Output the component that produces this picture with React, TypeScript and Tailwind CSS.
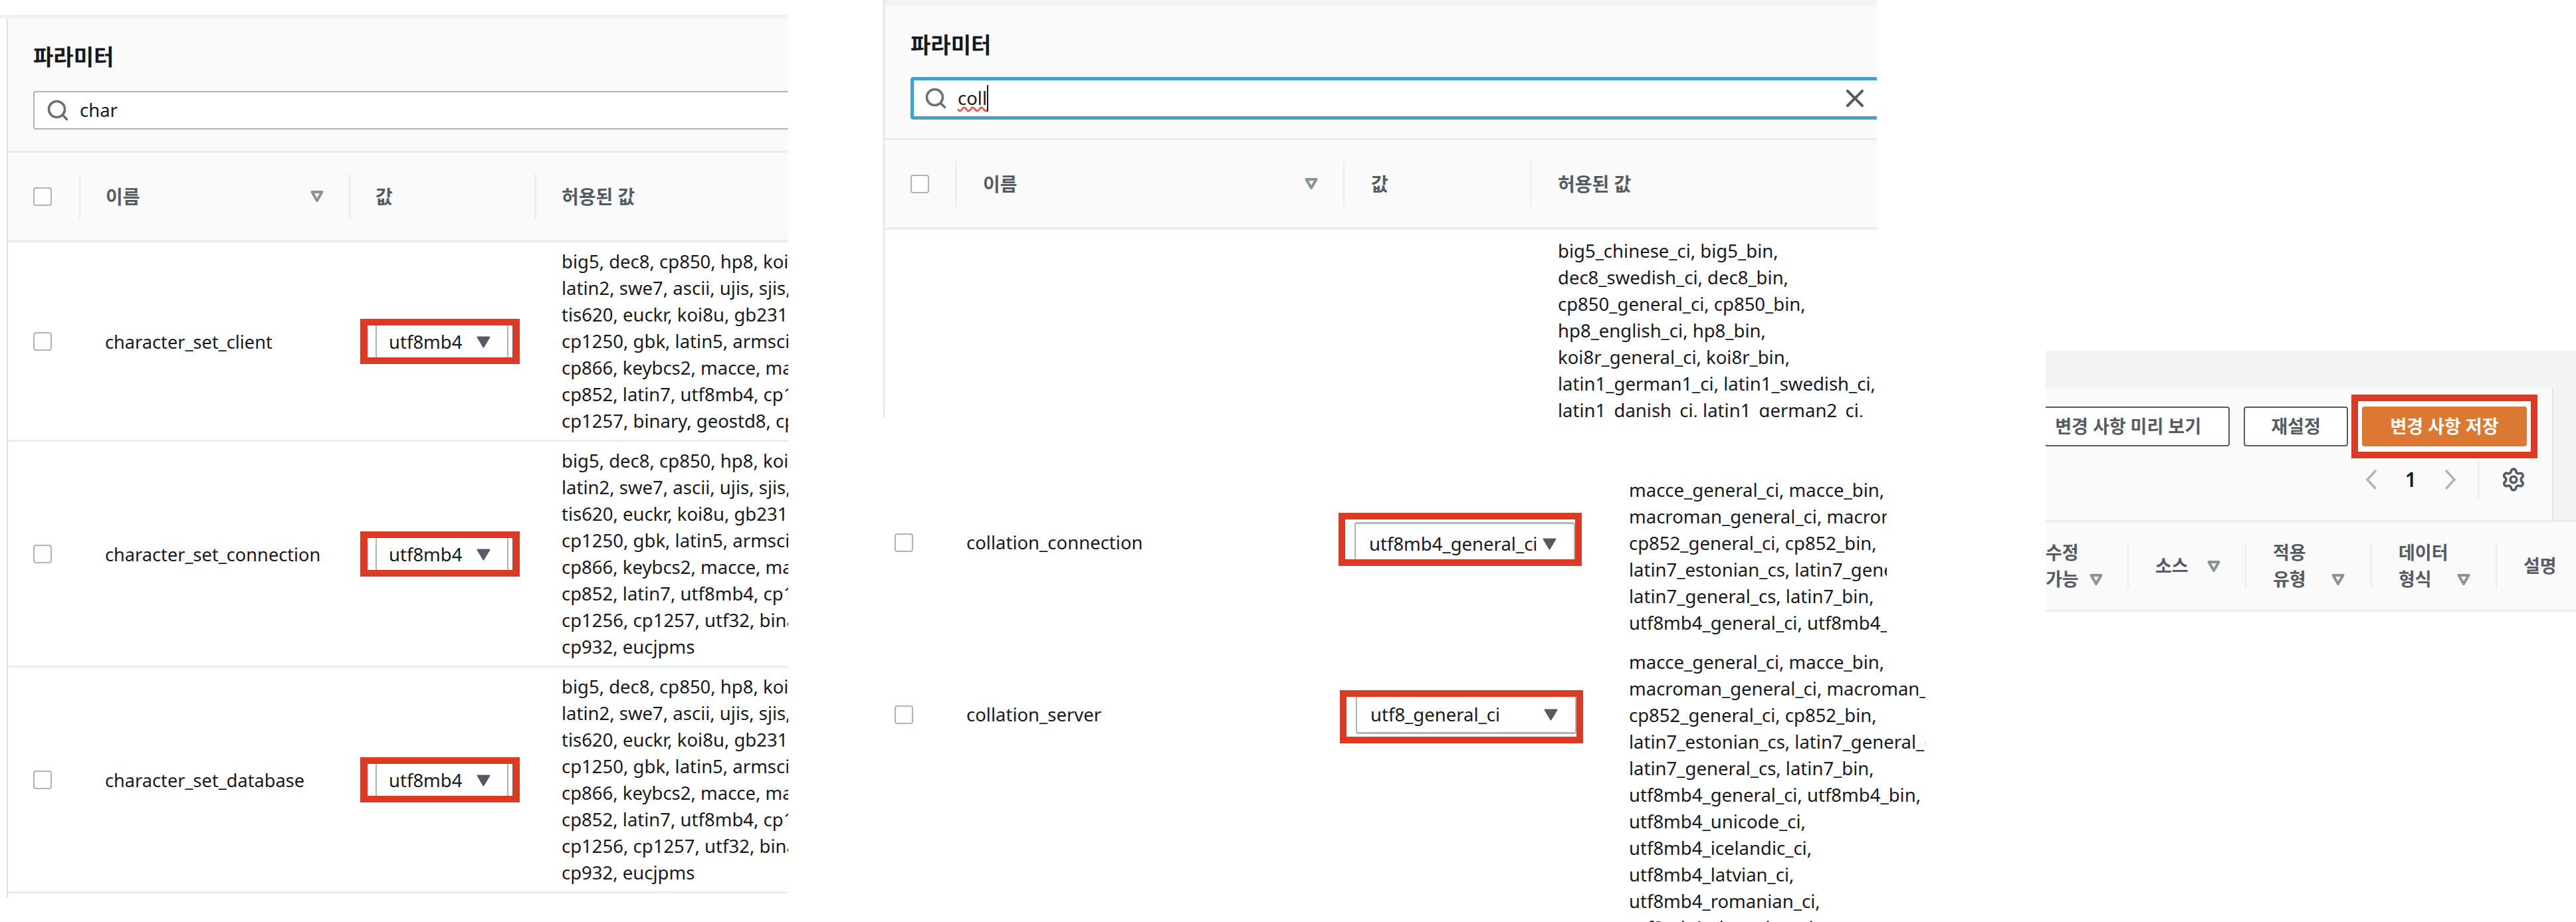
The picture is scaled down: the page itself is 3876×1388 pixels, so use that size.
import React from "react";
import { Search, X, Settings } from "lucide-react";

const FONT = "font-['Noto_Sans','Noto_Sans_CJK_KR',sans-serif]";

const SortIcon = () => (
  <svg width="20" height="17" viewBox="0 0 20 17" className="shrink-0">
    <path d="M2.5 2H17.5L10 15Z" fill="none" stroke="#879596" strokeWidth="4" strokeLinejoin="round" />
  </svg>
);

const SelectCaret = () => (
  <svg width="21" height="18" viewBox="0 0 21 18" className="shrink-0">
    <path d="M1.5 1.5H19.5L10.5 16.5Z" fill="#545b64" stroke="#545b64" strokeWidth="2" strokeLinejoin="round" />
  </svg>
);

const Chevron = ({ dir }: { dir: "l" | "r" }) => (
  <svg width="20" height="32" viewBox="0 0 20 32" className="shrink-0">
    <path
      d={dir === "l" ? "M17 2L4 16L17 30" : "M3 2L16 16L3 30"}
      fill="none"
      stroke="#aab7b8"
      strokeWidth="3.5"
    />
  </svg>
);

const Checkbox = () => (
  <div className="w-[28px] h-[28px] shrink-0 rounded-[4px] border-2 border-[#aab7b8] bg-white" />
);

const Divider = () => <div className="w-[2px] h-[68px] bg-[#eaeded] shrink-0" />;

const HeadLabel = ({ children, pad }: { children: React.ReactNode; pad: string }) => (
  <span className={`${pad} text-[28px] font-semibold text-[#545b64] whitespace-nowrap`}>{children}</span>
);

const HeadRow = ({
  widths,
  boxPad,
  pad,
}: {
  widths: string[];
  boxPad: string;
  pad: string;
}) => (
  <div className="flex items-center h-[138px] bg-[#fafafa] border-b-[4px] border-[#eaeded] border-t-[3px]">
    <div className={`${widths[0]} flex items-center justify-between shrink-0`}>
      <div className={boxPad}>
        <Checkbox />
      </div>
      <Divider />
    </div>
    <div className={`${widths[1]} flex items-center justify-between shrink-0`}>
      <HeadLabel pad={pad}>이름</HeadLabel>
      <div className="flex items-center gap-[38px]">
        <SortIcon />
        <Divider />
      </div>
    </div>
    <div className={`${widths[2]} flex items-center justify-between shrink-0`}>
      <HeadLabel pad={pad}>값</HeadLabel>
      <Divider />
    </div>
    <HeadLabel pad={pad}>허용된 값</HeadLabel>
  </div>
);

const Lines = ({ lines, className = "" }: { lines: string[]; className?: string }) => (
  <div className={`overflow-hidden whitespace-nowrap text-[27.5px] leading-[40px] text-[#16191f] ${className}`}>
    {lines.map((l, i) => (
      <div key={i}>{l}</div>
    ))}
  </div>
);

const set7 = [
  "big5, dec8, cp850, hp8, koi8r, latin1,",
  "latin2, swe7, ascii, ujis, sjis, hebrew,",
  "tis620, euckr, koi8u, gb2312, greek,",
  "cp1250, gbk, latin5, armscii8, utf8, ucs2,",
  "cp866, keybcs2, macce, macroman,",
  "cp852, latin7, utf8mb4, cp1251, utf16,",
  "cp1257, binary, geostd8, cp932, eucjpms",
];
const set8 = [
  ...set7.slice(0, 6),
  "cp1256, cp1257, utf32, binary, geostd8,",
  "cp932, eucjpms",
];

const CharRow = ({ name, lines, h }: { name: string; lines: string[]; h: string }) => (
  <div className={`flex items-center ${h} bg-white border-b-[3px] border-[#eaeded]`}>
    <div className="w-[109px] pl-[38px] shrink-0">
      <Checkbox />
    </div>
    <div className="w-[406px] pl-[37px] pt-[3px] shrink-0 text-[27.2px] text-[#16191f] whitespace-nowrap">{name}</div>
    <div className="w-[318px] pl-[15px] shrink-0">
      <div className="w-[240px] h-[68px] border-x-[11px] border-y-[10px] border-[#db3a25] bg-white flex">
        <div className="ml-[12px] w-[200px] border-x-2 border-[#aab7b8] flex items-center pl-[18px] pt-[2px] text-[27.5px] text-[#16191f] gap-[22px]">
          <span>utf8mb4</span>
          <SelectCaret />
        </div>
      </div>
    </div>
    <Lines lines={lines} />
  </div>
);

const CollRow = ({
  name,
  value,
  lines,
  listClass,
  redClass,
  rowH,
  selectClass,
}: {
  name: string;
  value: string;
  lines: string[];
  listClass: string;
  redClass: string;
  rowH: string;
  selectClass: string;
}) => (
  <div className={`flex items-start ${rowH}`}>
    <div className="flex items-center h-[198px]">
      <div className="ml-[17px] w-[108px] shrink-0">
        <Checkbox />
      </div>
      <div className="w-[560px] shrink-0 text-[27.5px] text-[#16191f] whitespace-nowrap">{name}</div>
      <div className={`${redClass} w-[366px] h-[80px] shrink-0 border-[10px] border-[#db3a25] bg-white flex`}>
        <div
          className={`${selectClass} ml-[14px] w-[332px] border-x-2 border-[#aab7b8] flex items-center pl-[20px] text-[27.5px] text-[#16191f] justify-between pr-[26px] whitespace-nowrap`}
        >
          <span>{value}</span>
          <SelectCaret />
        </div>
      </div>
    </div>
    <Lines lines={lines} className={listClass} />
  </div>
);

export default function App() {
  return (
    <div className={`${FONT} w-[3876px] h-[1388px] overflow-hidden bg-white flex items-start`}>
      {/* first crop */}
      <div className="w-[1186px] h-[1352px] overflow-hidden pt-[22px] shrink-0">
        <div className="h-[6px] bg-[#f2f3f3]" />
        <div className="ml-[10px] h-[1324px] w-[1500px] border-l-2 border-[#dfe3e3]">
          <div className="h-[199px] bg-[#fafafa] pl-[38px] pt-[34px]">
            <div className="h-[48px] flex items-center text-[33px] font-bold text-[#16191f]">파라미터</div>
            <div className="mt-[27px] h-[58px] w-[1200px] flex items-center rounded-[4px] border-2 border-[#aab7b8] bg-white pl-[17px]">
              <Search size={36} strokeWidth={2.4} className="text-[#687078] shrink-0" />
              <span className="ml-[15px] text-[#16191f] text-[27.5px] leading-[40px]">char</span>
            </div>
          </div>
          <HeadRow widths={["w-[109px]", "w-[406px]", "w-[280px]"]} boxPad="pl-[38px]" pad="pl-[38px]" />
          <CharRow name="character_set_client" lines={set7} h="h-[300px]" />
          <CharRow name="character_set_connection" lines={set8} h="h-[340px]" />
          <CharRow name="character_set_database" lines={set8} h="h-[340px]" />
        </div>
      </div>

      {/* second crop */}
      <div className="ml-[143px] w-[1568px] h-[1388px] shrink-0 overflow-hidden">
        <div className="w-[1495px] h-[628px] overflow-hidden border-l-2 border-[#dfe3e3]">
          <div className="h-[9px] bg-[#f2f3f3]" />
          <div className="h-[199px] bg-[#fafafa] pl-[39px] pt-[35px]">
            <div className="h-[48px] flex items-center text-[33px] font-bold text-[#16191f]">파라미터</div>
            <div className="mt-[24px] h-[64px] w-[1480px] flex items-center rounded-[4px] border-[5px] border-[#44a0c8] bg-white pl-[15px]">
              <Search size={36} strokeWidth={2.4} className="text-[#687078] shrink-0" />
              <span className="ml-[15px] text-[#16191f] text-[27.5px] leading-[40px] underline decoration-wavy decoration-[#e8534f] border-r-2 border-[#16191f]">
                coll
              </span>
              <div className="flex-1" />
              <X size={44} strokeWidth={2.2} className="text-[#545b64] mr-[32px]" />
            </div>
          </div>
          <HeadRow widths={["w-[108px]", "w-[584px]", "w-[281px]"]} boxPad="pl-[39px]" pad="pl-[40px]" />
          <div className="pl-[1013px] pt-[12px]">
            <Lines
              lines={[
                "big5_chinese_ci, big5_bin,",
                "dec8_swedish_ci, dec8_bin,",
                "cp850_general_ci, cp850_bin,",
                "hp8_english_ci, hp8_bin,",
                "koi8r_general_ci, koi8r_bin,",
                "latin1_german1_ci, latin1_swedish_ci,",
                "latin1_danish_ci, latin1_german2_ci,",
              ]}
            />
          </div>
        </div>
        <div className="pt-[90px]">
          <CollRow
            name="collation_connection"
            value="utf8mb4_general_ci"
            listClass="w-[388px] ml-[71px]"
            redClass="mb-[10px]"
            rowH="h-[259px]"
            selectClass="mt-[4px] pt-[6px] border-t-[3px] rounded-t-[4px]"
            lines={[
              "macce_general_ci, macce_bin,",
              "macroman_general_ci, macroman_bin,",
              "cp852_general_ci, cp852_bin,",
              "latin7_estonian_cs, latin7_general_ci,",
              "latin7_general_cs, latin7_bin,",
              "utf8mb4_general_ci, utf8mb4_bin,",
            ]}
          />
          <CollRow
            name="collation_server"
            value="utf8_general_ci"
            listClass="w-[446px] ml-[69px]"
            redClass="ml-[2px] mt-[6px]"
            rowH="h-[440px]"
            selectClass="mb-[4px] border-b-[3px] rounded-b-[4px]"
            lines={[
              "macce_general_ci, macce_bin,",
              "macroman_general_ci, macroman_bin,",
              "cp852_general_ci, cp852_bin,",
              "latin7_estonian_cs, latin7_general_ci,",
              "latin7_general_cs, latin7_bin,",
              "utf8mb4_general_ci, utf8mb4_bin,",
              "utf8mb4_unicode_ci,",
              "utf8mb4_icelandic_ci,",
              "utf8mb4_latvian_ci,",
              "utf8mb4_romanian_ci,",
              "utf8mb4_slovenian_ci,",
            ]}
          />
        </div>
      </div>

      {/* third crop */}
      <div className="ml-[181px] w-[798px] mt-[528px] shrink-0 overflow-hidden">
        <div className="bg-[#f2f3f3] pt-[55px]">
          <div className="mr-[34px] h-[200px] bg-[#fafafa] border-r-2 border-[#dfe3e3] pt-[11px]">
            <div className="flex items-center justify-end pr-[22px] h-[96px]">
              <div className="w-[300px] mr-[21px] h-[60px] shrink-0 flex items-center justify-end pr-[41px] rounded-[4px] border-2 border-[#545b64] bg-white text-[27px] font-semibold text-[#545b64] whitespace-nowrap">
                변경 사항 미리 보기
              </div>
              <div className="w-[157px] h-[60px] shrink-0 flex items-center justify-center rounded-[4px] border-2 border-[#545b64] bg-white text-[27px] font-semibold text-[#545b64]">
                재설정
              </div>
              <div className="ml-[5px] w-[280px] h-[96px] shrink-0 border-[10px] border-[#db3a25] bg-white flex items-center justify-center">
                <div className="w-[248px] h-[60px] rounded-[4px] bg-[#dd7832] flex items-center justify-center text-[27px] font-semibold text-white whitespace-nowrap">
                  변경 사항 저장
                </div>
              </div>
            </div>
            <div className="flex items-center justify-end pr-[39px] h-[60px] mt-[2px]">
              <Chevron dir="l" />
              <span className="mx-[41px] text-[30px] leading-[40px] font-semibold text-[#16191f]">1</span>
              <Chevron dir="r" />
              <div className="ml-[31px] w-[2px] h-[60px] bg-[#eaeded]" />
              <Settings size={38} strokeWidth={2.3} className="ml-[33px] text-[#545b64]" />
            </div>
          </div>
        </div>
        <div className="h-[138px] bg-[#fafafa] border-y-[3px] border-[#eaeded] flex items-center text-[27px] font-semibold text-[#545b64] leading-[40px]">
          <div className="w-[125px] shrink-0 flex items-center">
            <div className="flex items-end">
              <div>
                <div>수정</div>
                <div>가능</div>
              </div>
              <div className="ml-[16px] mb-[11px]">
                <SortIcon />
              </div>
            </div>
            <div className="flex-1" />
            <Divider />
          </div>
          <div className="w-[177px] shrink-0 flex items-center pl-[40px]">
            <span>소스</span>
            <div className="ml-[28px]">
              <SortIcon />
            </div>
            <div className="flex-1" />
            <Divider />
          </div>
          <div className="w-[189px] shrink-0 flex items-center pl-[40px]">
            <div className="flex items-end">
              <div>
                <div>적용</div>
                <div>유형</div>
              </div>
              <div className="ml-[38px] mb-[11px]">
                <SortIcon />
              </div>
            </div>
            <div className="flex-1" />
            <Divider />
          </div>
          <div className="w-[188px] shrink-0 flex items-center pl-[40px]">
            <div className="flex items-end">
              <div>
                <div className="whitespace-nowrap">데이터</div>
                <div>형식</div>
              </div>
              <div className="ml-[13px] mb-[11px]">
                <SortIcon />
              </div>
            </div>
            <div className="flex-1" />
            <Divider />
          </div>
          <div className="pl-[40px] whitespace-nowrap">설명</div>
        </div>
      </div>
    </div>
  );
}
